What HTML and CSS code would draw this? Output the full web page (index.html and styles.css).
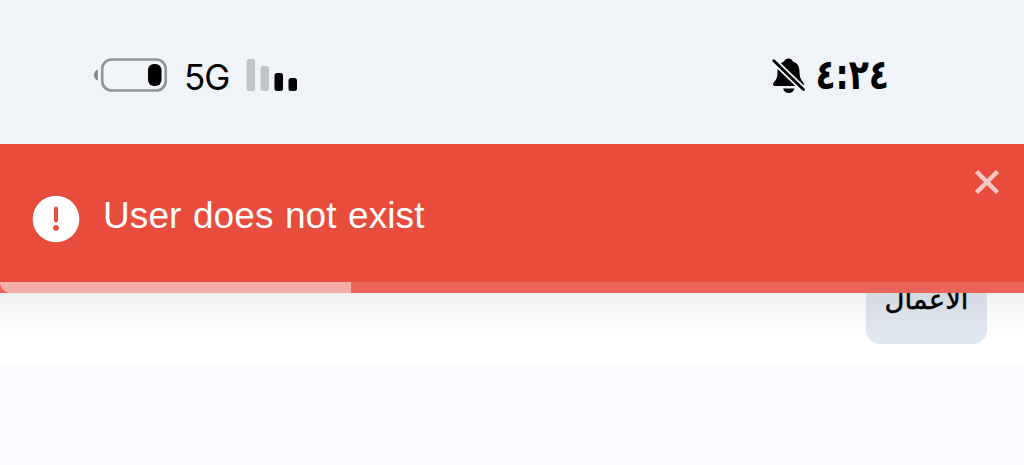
FILE: index.html
```html
<!DOCTYPE html>
<html lang="ar">
<head>
    <meta charset="utf-8">
    <title>تسجيل الدخول</title>
    <link rel="stylesheet" href="styles.css">
</head>
<body>
    <div class="status-bar">
        <div class="status-left">
            <svg class="battery" width="74" height="34" viewBox="0 0 74 34">
                <path d="M4.800 11.500v11C-.3 21 -.3 13 4.800 11.500z" fill="#85888b"/>
                <rect x="9.200" y="1.500" width="63.500" height="31" rx="9.500" fill="none" stroke="#929598" stroke-width="2.600"/>
                <rect x="55" y="6" width="13.500" height="22" rx="6" fill="#000"/>
            </svg>
            <span class="network">5G</span>
            <svg class="signal" width="52" height="34" viewBox="0 0 52 34">
                <rect x="0.500" y="1" width="8.500" height="32" rx="2.500" fill="#c1c4c8"/>
                <rect x="14.500" y="8" width="8.500" height="25" rx="2.500" fill="#c1c4c8"/>
                <rect x="28.500" y="15" width="8.500" height="18" rx="2.500"/>
                <rect x="42.500" y="20" width="8.500" height="13" rx="2.500"/>
            </svg>
        </div>
        <div class="status-right">
            <svg class="bell" width="34" height="36" viewBox="0 0 34 36">
                <path d="M12 3.500C13 1.500 14.500 .5 16.500 .5s3.500 1 4.500 3c4.500 1.500 6.500 5 6.500 10 0 5.500 1 7.500 3.500 10.500 1.500 2 1.200 4-.5 4H3c-2.500 0-2.500-2.500-.8-4.200C5 21 5.500 18.500 5.500 13.500c0-5 2-8.500 6.500-10z"/>
                <path d="M11 30.500h11.500c-1 3-3 4.500-5.700 4.500S12 33.500 11 30.500z"/>
                <path d="M1.500 2.500l31 30" stroke="#f0f4f9" stroke-width="6.500"/>
                <path d="M1.800 2.800l29.700 28.700" stroke="#000" stroke-width="2.800" stroke-linecap="round"/>
            </svg>
            <span class="time">٤:٢٤</span>
        </div>
    </div>

    <div class="toast">
        <svg class="toast-icon" width="48" height="48" viewBox="0 0 48 48">
            <circle cx="24" cy="24" r="23.300" fill="#fff"/>
            <path d="M24 13.500v12" stroke="#e74c3c" stroke-width="4" stroke-linecap="round"/>
            <circle cx="24" cy="32.800" r="2.900" fill="#e74c3c"/>
        </svg>
        <span class="toast-text">User does not exist</span>
        <svg class="toast-close" width="26" height="26" viewBox="0 0 26 26">
            <path d="M2.500 2.500l21 21M23.500 2.500l-21 21" stroke="#fff" stroke-width="4.500"/>
        </svg>
        <div class="progress"><div class="progress-value"></div></div>
    </div>

    <div class="header">
        <div class="chip" dir="rtl">الاعمال</div>
    </div>
</body>
</html>
```

FILE: styles.css
```css
body{margin:0;height:465px;overflow:hidden;position:relative;background:#fafbff;font-family:"Liberation Sans",Arial,sans-serif;}

.status-bar{display:flex;justify-content:space-between;box-sizing:border-box;height:144px;padding:58px 135px 0 93px;background:#f0f4f9;}
.status-left,.status-right{display:flex;align-items:flex-start;height:36px;}
.network{margin:1px 0 0 17px;font-family:Inter,sans-serif;font-size:35px;line-height:36px;letter-spacing:-1px;}
.signal{margin-left:17px;}
.time{margin-left:9px;font-family:"DejaVu Sans",sans-serif;font-size:33px;font-weight:bold;line-height:34px;transform:scaleY(1.27);}

.toast{position:absolute;top:144px;left:0;z-index:2;display:flex;align-items:center;box-sizing:border-box;width:100%;height:149px;padding:0 24px 0 32px;background:#e74c3c;color:#fff;}
.toast-text{margin:-5px 0 0 23px;font-size:37px;letter-spacing:.1px;word-spacing:1px;}
.toast-close{align-self:flex-start;margin:25px 0 0 auto;opacity:.7;}
.progress{position:absolute;left:0;bottom:0;width:100%;height:11px;background:rgba(255,255,255,.14);}
.progress-value{width:351px;height:11px;border-radius:0 0 0 12px;background:rgba(255,255,255,.48);}

.header{position:relative;display:flex;justify-content:flex-end;align-items:flex-end;box-sizing:border-box;height:221px;padding:0 37px 21px 0;background:#fff;}
.header:before{content:"";position:absolute;top:149px;left:0;z-index:1;width:100%;height:40px;background:linear-gradient(rgba(0,0,0,.06),rgba(0,0,0,0));}
.chip{box-sizing:border-box;width:121px;height:80px;padding-top:17px;border-radius:14px;background:#e0e7f0;font-family:"DejaVu Sans",sans-serif;font-size:27.500px;line-height:36px;text-align:center;-webkit-text-stroke:.5px #000;}
```
